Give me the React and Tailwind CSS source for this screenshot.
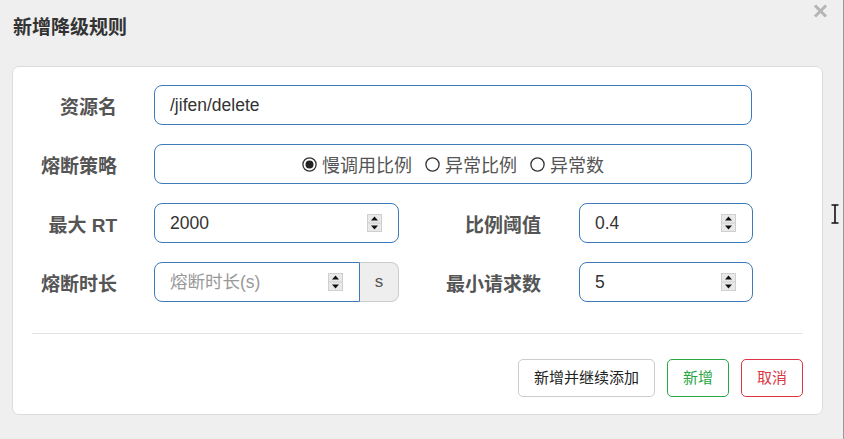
import React from 'react';

const font = { fontFamily: '"Liberation Sans", "Noto Sans CJK SC", sans-serif' };

function Spinner() {
  return (
    <svg width="15" height="18" viewBox="0 0 15 18" className="shrink-0">
      <rect x="0" y="0" width="15" height="18" fill="#cfcfcf" />
      <rect x="1" y="1" width="13" height="7.5" fill="#e9e9e9" />
      <rect x="1" y="9.5" width="13" height="7.5" fill="#e9e9e9" />
      <path d="M7.5 2.5 L11 6.5 L4 6.5 Z" fill="#111" />
      <path d="M7.5 15.5 L11 11.5 L4 11.5 Z" fill="#111" />
    </svg>
  );
}

function Radio({ checked, label }) {
  return (
    <label className="flex items-center gap-[5px]">
      <svg width="15" height="15" viewBox="0 0 15 15">
        <circle cx="7.5" cy="7.5" r="6.6" fill="#fff" stroke="#333" strokeWidth="1.3" />
        {checked && <circle cx="7.5" cy="7.5" r="4" fill="#222" />}
      </svg>
      <span className="text-[18px] text-[#555] pt-[4px]">{label}</span>
    </label>
  );
}

function Label({ children, className = '' }) {
  return (
    <div className={`text-right font-bold text-[19px] text-[#555] pt-[7px] ${className}`}>
      {children}
    </div>
  );
}

function NumberInput({ value, placeholder, className = '' }) {
  return (
    <div
      className={`h-[40px] border border-[#3c7ab9] bg-white flex items-center pl-[15px] pr-[16px] ${className}`}
    >
      <span className={`flex-1 text-[17.5px] ${value ? 'text-[#333]' : 'text-[#999]'}`}>
        {value || placeholder}
      </span>
      <Spinner />
    </div>
  );
}

export default function App() {
  return (
    <div className="w-[844px] h-[439px] bg-[#efefef] relative overflow-hidden border-r border-[#9a9a9a]" style={font}>
      <div className="flex justify-between items-start h-[66px]">
        <h1 className="pl-[13px] pt-[14px] text-[19px] font-bold text-[#333]">新增降级规则</h1>
        <svg width="15" height="14" viewBox="0 0 15 14" className="mt-[4px] mr-[15px]">
          <path d="M2 1.5 L13 12.5 M13 1.5 L2 12.5" stroke="#b5b5b5" strokeWidth="3" />
        </svg>
      </div>

      <div className="ml-[12px] w-[811px] h-[349px] bg-white border border-[#dcdcdc] rounded-[7px] pt-[18px]">
        <div className="flex flex-col gap-[19px]">
          <div className="flex items-center">
            <Label className="w-[104px]">资源名</Label>
            <div className="ml-[37px] w-[598px] h-[40px] border border-[#3c7ab9] rounded-[8px] flex items-center pl-[15px] text-[17.5px] text-[#333]">
              /jifen/delete
            </div>
          </div>

          <div className="flex items-center">
            <Label className="w-[104px]">熔断策略</Label>
            <div className="ml-[37px] w-[598px] h-[40px] border border-[#3c7ab9] rounded-[8px] flex items-center justify-center gap-[13px]">
              <Radio checked label="慢调用比例" />
              <Radio label="异常比例" />
              <Radio label="异常数" />
            </div>
          </div>

          <div className="flex items-center">
            <Label className="w-[104px]">最大 RT</Label>
            <NumberInput value="2000" className="ml-[37px] w-[245px] rounded-[8px]" />
            <Label className="w-[142px]">比例阈值</Label>
            <NumberInput value="0.4" className="ml-[38px] w-[174px] rounded-[8px]" />
          </div>

          <div className="flex items-center">
            <Label className="w-[104px]">熔断时长</Label>
            <div className="ml-[37px] w-[245px] flex">
              <NumberInput placeholder="熔断时长(s)" className="w-[206px] rounded-l-[8px]" />
              <div className="w-[39px] h-[40px] bg-[#eeeeee] border border-l-0 border-[#cccccc] rounded-r-[8px] flex items-center justify-center text-[17px] text-[#555]">
                s
              </div>
            </div>
            <Label className="w-[142px]">最小请求数</Label>
            <NumberInput value="5" className="ml-[38px] w-[174px] rounded-[8px]" />
          </div>
        </div>

        <div className="mx-[19px] mt-[31px] border-t border-[#e3e3e3]" />

        <div className="flex justify-end gap-[12px] pr-[19px] mt-[25px]">
          <button className="h-[38px] px-[15px] border border-[#cccccc] rounded-[5px] bg-white text-[15px] text-[#222]">
            新增并继续添加
          </button>
          <button className="h-[38px] w-[62px] border border-[#28a745] rounded-[5px] bg-white text-[15px] text-[#28a745]">
            新增
          </button>
          <button className="h-[38px] w-[62px] border border-[#dc3545] rounded-[5px] bg-white text-[15px] text-[#dc3545]">
            取消
          </button>
        </div>
      </div>

      <svg width="8" height="20" viewBox="0 0 8 20" className="absolute left-[831px] top-[204px]">
        <path d="M0.5 1 H7.5 M0.5 19 H7.5 M4 1 V19" stroke="#111" strokeWidth="1.6" />
      </svg>
    </div>
  );
}
